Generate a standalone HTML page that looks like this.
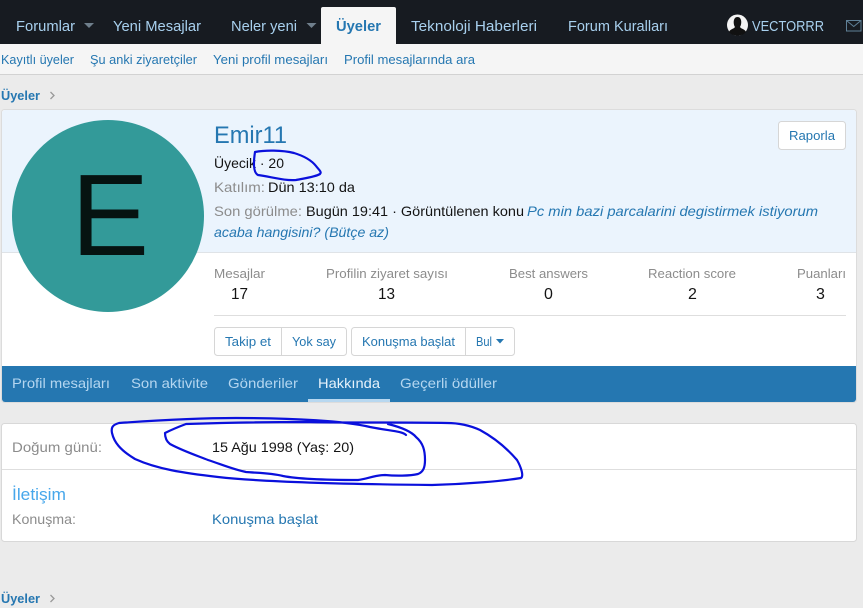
<!DOCTYPE html>
<html lang="tr"><head><meta charset="utf-8"><title>Emir11</title>
<style>
html,body{margin:0;padding:0;background:#ebebeb;width:863px;height:608px;overflow:hidden}
svg{display:block;position:absolute;left:0;top:0}
text{font-family:"Liberation Sans",sans-serif;font-size:14px}
.n{fill:#a8d0ee;font-size:15px}
.s{fill:#2577b1;font-size:13px}
.l{fill:#8c8c8c}
.k{fill:#141414}
.a{fill:#2577b1}
.v{fill:#141414;font-size:16px}
.t{fill:#b4d6f0}
</style></head><body>
<svg width="863" height="608" viewBox="0 0 863 608" xmlns="http://www.w3.org/2000/svg">
<rect width="863" height="608" fill="#ebebeb"/>
<!-- top nav -->
<rect width="863" height="44" fill="#171b21"/>
<path d="M321 44V9a2 2 0 0 1 2-2h71a2 2 0 0 1 2 2v35z" fill="#f5f5f5"/>
<text class="n" x="16" y="31" textLength="59" lengthAdjust="spacingAndGlyphs">Forumlar</text>
<path d="M84 23h10l-5 5z" fill="#6f7f8c"/>
<text class="n" x="113" y="31" textLength="88" lengthAdjust="spacingAndGlyphs">Yeni Mesajlar</text>
<text class="n" x="231" y="31" textLength="66" lengthAdjust="spacingAndGlyphs">Neler yeni</text>
<path d="M306.500 23h10l-5 5z" fill="#6f7f8c"/>
<text x="336" y="31" textLength="45" lengthAdjust="spacingAndGlyphs" style="font-size:15px;font-weight:bold;fill:#2577b1">Üyeler</text>
<text class="n" x="411" y="31" textLength="126" lengthAdjust="spacingAndGlyphs">Teknoloji Haberleri</text>
<text class="n" x="568" y="31" textLength="100" lengthAdjust="spacingAndGlyphs">Forum Kuralları</text>
<circle cx="737.500" cy="25" r="10.500" fill="#f4f4f4"/>
<path d="M729 32c1-3 5-3 6-5-2-3-2-10 2.500-10s4.500 7 2.500 10c1 2 5 2 6 5-2 2.500-5 3.500-8.500 3.500s-6.500-1-8.500-3.500z" fill="#111"/>
<text class="n" x="752" y="31" textLength="72" lengthAdjust="spacingAndGlyphs">VECTORRR</text>
<rect x="846.500" y="20.500" width="14.500" height="10.500" fill="none" stroke="#5f8097"/>
<path d="M846.500 20.500l7.250 6 7.250-6" fill="none" stroke="#5f8097"/>
<!-- sub nav -->
<rect y="44" width="863" height="30" fill="#f5f5f5"/>
<rect y="74" width="863" height="1" fill="#d2d2d2"/>
<text class="s" x="1" y="64" textLength="73" lengthAdjust="spacingAndGlyphs">Kayıtlı üyeler</text>
<text class="s" x="90" y="64" textLength="107" lengthAdjust="spacingAndGlyphs">Şu anki ziyaretçiler</text>
<text class="s" x="213" y="64" textLength="115" lengthAdjust="spacingAndGlyphs">Yeni profil mesajları</text>
<text class="s" x="344" y="64" textLength="131" lengthAdjust="spacingAndGlyphs">Profil mesajlarında ara</text>
<!-- breadcrumb -->
<text x="1" y="100" textLength="39" lengthAdjust="spacingAndGlyphs" style="font-size:13px;font-weight:bold;fill:#2577b1">Üyeler</text>
<path d="M50.500 92l3.500 3.500-3.500 3.500" fill="none" stroke="#999" stroke-width="1.300"/>
<!-- profile card -->
<rect x="1.500" y="109.500" width="855" height="293" rx="3" fill="#fff" stroke="#dcdcdc"/>
<path d="M2 252V113a3 3 0 0 1 3-3h848a3 3 0 0 1 3 3v139z" fill="#ebf4fd"/>
<rect x="2" y="252" width="854" height="1" fill="#dfe3e7"/>
<circle cx="108" cy="216" r="96" fill="#339a99"/>
<text transform="translate(71 255) scale(1.01 1)" style="font-size:116px;fill:#061311">E</text>
<text x="214" y="143" textLength="73" lengthAdjust="spacingAndGlyphs" style="font-size:24px;fill:#2577b1">Emir11</text>
<text class="k" x="214" y="168" textLength="70" lengthAdjust="spacingAndGlyphs">Üyecik · 20</text>
<text class="l" x="214" y="192" textLength="51" lengthAdjust="spacingAndGlyphs">Katılım:</text>
<text class="k" x="268" y="192" textLength="87" lengthAdjust="spacingAndGlyphs">Dün 13:10 da</text>
<text class="l" x="214" y="216" textLength="88" lengthAdjust="spacingAndGlyphs">Son görülme:</text>
<text class="k" x="306" y="216" textLength="218" lengthAdjust="spacingAndGlyphs">Bugün 19:41 · Görüntülenen konu</text>
<text class="a" x="527" y="216" textLength="291" lengthAdjust="spacingAndGlyphs" font-style="italic">Pc min bazi parcalarini degistirmek istiyorum</text>
<text class="a" x="214" y="237" textLength="175" lengthAdjust="spacingAndGlyphs" font-style="italic">acaba hangisini? (Bütçe az)</text>
<rect x="778.500" y="121.500" width="67" height="28" rx="3" fill="#fff" stroke="#d6d6d6"/>
<text class="a" x="789" y="140" textLength="46" lengthAdjust="spacingAndGlyphs" style="font-size:13px">Raporla</text>
<!-- stats -->
<text class="l" x="214" y="278" textLength="51" lengthAdjust="spacingAndGlyphs" style="font-size:13px">Mesajlar</text>
<text class="v" x="231" y="299" textLength="17" lengthAdjust="spacingAndGlyphs">17</text>
<text class="l" x="326" y="278" textLength="122" lengthAdjust="spacingAndGlyphs" style="font-size:13px">Profilin ziyaret sayısı</text>
<text class="v" x="378" y="299" textLength="17" lengthAdjust="spacingAndGlyphs">13</text>
<text class="l" x="509" y="278" textLength="79" lengthAdjust="spacingAndGlyphs" style="font-size:13px">Best answers</text>
<text class="v" x="544" y="299">0</text>
<text class="l" x="648" y="278" textLength="88" lengthAdjust="spacingAndGlyphs" style="font-size:13px">Reaction score</text>
<text class="v" x="688" y="299">2</text>
<text class="l" x="797" y="278" textLength="49" lengthAdjust="spacingAndGlyphs" style="font-size:13px">Puanları</text>
<text class="v" x="816" y="299">3</text>
<rect x="214" y="315" width="632" height="1" fill="#dedede"/>
<!-- buttons -->
<rect x="214.500" y="327.500" width="132" height="28" rx="3" fill="#fff" stroke="#d6d6d6"/>
<rect x="281" y="328" width="1" height="27" fill="#d6d6d6"/>
<rect x="351.500" y="327.500" width="163" height="28" rx="3" fill="#fff" stroke="#d6d6d6"/>
<rect x="465" y="328" width="1" height="27" fill="#d6d6d6"/>
<text class="a" x="225" y="346" textLength="46" lengthAdjust="spacingAndGlyphs" style="font-size:13px">Takip et</text>
<text class="a" x="292" y="346" textLength="44" lengthAdjust="spacingAndGlyphs" style="font-size:13px">Yok say</text>
<text class="a" x="362" y="346" textLength="93" lengthAdjust="spacingAndGlyphs" style="font-size:13px">Konuşma başlat</text>
<text class="a" x="476" y="346" textLength="16" lengthAdjust="spacingAndGlyphs" style="font-size:13px">Bul</text>
<path d="M496 339h8l-4 4.500z" fill="#2577b1"/>
<!-- tabs -->
<path d="M2 366h854v33a3 3 0 0 1-3 3H5a3 3 0 0 1-3-3z" fill="#2577b1"/>
<text class="t" x="12" y="388" textLength="98" lengthAdjust="spacingAndGlyphs">Profil mesajları</text>
<text class="t" x="131" y="388" textLength="77" lengthAdjust="spacingAndGlyphs">Son aktivite</text>
<text class="t" x="228" y="388" textLength="70" lengthAdjust="spacingAndGlyphs">Gönderiler</text>
<text x="318" y="388" textLength="62" lengthAdjust="spacingAndGlyphs" style="fill:#e6f2fb">Hakkında</text>
<text class="t" x="400" y="388" textLength="97" lengthAdjust="spacingAndGlyphs">Geçerli ödüller</text>
<rect x="308" y="399" width="82" height="3" fill="#b8d8f0"/>
<!-- about card -->
<rect x="1.500" y="423.500" width="855" height="118" rx="3" fill="#fff" stroke="#d8d8d8"/>
<rect x="2" y="469" width="854" height="1" fill="#dedede"/>
<text class="l" x="12" y="452" textLength="90" lengthAdjust="spacingAndGlyphs">Doğum günü:</text>
<text class="k" x="212" y="452" textLength="142" lengthAdjust="spacingAndGlyphs">15 Ağu 1998 (Yaş: 20)</text>
<text x="12" y="500" textLength="54" lengthAdjust="spacingAndGlyphs" style="font-size:17px;fill:#47a7eb">İletişim</text>
<text class="l" x="12" y="524" textLength="64" lengthAdjust="spacingAndGlyphs">Konuşma:</text>
<text class="a" x="212" y="524" textLength="106" lengthAdjust="spacingAndGlyphs">Konuşma başlat</text>
<!-- footer breadcrumb -->
<text x="1" y="603" textLength="39" lengthAdjust="spacingAndGlyphs" style="font-size:13px;font-weight:bold;fill:#2577b1">Üyeler</text>
<path d="M50.500 595l3.500 3.500-3.500 3.500" fill="none" stroke="#999" stroke-width="1.300"/>
<!-- pen scribbles -->
<g fill="none" stroke="#0a10dc" stroke-width="2.200" stroke-linecap="round" stroke-linejoin="round">
<path d="M255 152C265 150 282 150 294 153C304 156 312 161 316 166C319 170 322 172 320 174C315 177 306 178 296 180C285 181 272 177 258 175C254 173 253 165 255 152Z"/>
<path d="M406 435C402 431 390 431 370 427C345 421 295 418 236 418C193 418 147 421 119 423C112 425 111 428 112 433C114 442 120 450 135 459C157 469 183 473 218 477C263 482 335 484 432 485C468 484 503 481 521 478C524 476 521 467 517 460C505 446 491 436 480 430C469 425 459 423 447 423C397 422 345 423 305 422C265 422 218 423 186 424C178 427 171 430 165 433C165 437 166 441 170 444C183 451 198 456 208 460C223 465 235 470 246 472C258 473 271 473 283 476C298 479 324 480 358 480C367 479 375 475 385 475C395 476 410 476 418 474C423 472 425 468 425 460C425 450 423 443 416 437C411 431 400 427 388 424"/>
</g>
</svg>
</body></html>
